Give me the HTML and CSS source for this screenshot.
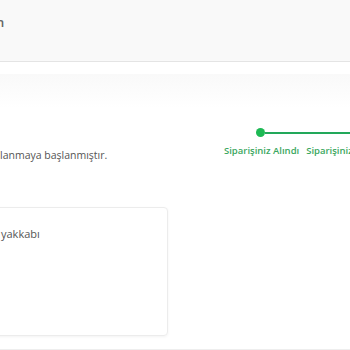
FILE: index.html
```html
<!DOCTYPE html>
<html lang="tr">

<head>
    <meta charset="UTF-8">
    <meta name="viewport" content="width=device-width, initial-scale=1.0">
    <title>Sipariş Detayı</title>
    <link rel="stylesheet" href="styles.css">
</head>

<body>
    <div class="page-head">
        <span class="head-title">n</span>
    </div>

    <div class="head-shade"></div>

    <div class="status-row">
        <p class="status-text">lanmaya başlanmıştır.</p>
        <div class="stepper">
            <div class="step-track">
                <span class="step-dot"></span>
                <span class="step-line"></span>
            </div>
            <div class="step-labels">
                <span>Siparişiniz Alındı</span>
                <span>Siparişiniz</span>
            </div>
        </div>
    </div>

    <div class="product-card">
        <p class="product-name">yakkabı</p>
    </div>

    <div class="bottom-line"></div>
</body>

</html>
```

FILE: styles.css
```css
* {
    box-sizing: border-box;
    margin: 0;
    padding: 0;
}

body {
    width: 350px;
    height: 350px;
    overflow: hidden;
    background: #fff;
    font-family: "Open Sans", "Noto Sans", sans-serif;
    color: #555;
}

.page-head {
    height: 62px;
    padding-top: 14px;
    background: #f9f9f9;
    border-bottom: 1px solid #e4e4e4;
}

.head-title {
    display: block;
    margin-left: -4px;
    font-size: 13px;
    font-weight: 600;
    color: #666;
    line-height: 16px;
}

.head-shade {
    height: 34px;
    margin-top: 12px;
    background: linear-gradient(#f9f9f9, #fff);
}

.status-row {
    display: flex;
    justify-content: space-between;
    height: 99px;
    padding-top: 20px;
}

.status-text {
    margin-top: 20px;
    font-size: 10.5px;
    line-height: 14px;
    color: #555;
}

.stepper {
    width: 126px;
    flex-shrink: 0;
}

.step-track {
    display: flex;
    align-items: center;
    height: 9px;
    padding-left: 32px;
}

.step-dot {
    width: 9px;
    height: 9px;
    border-radius: 50%;
    background: #1db954;
    flex-shrink: 0;
}

.step-line {
    flex: 1;
    height: 2px;
    background: #22a85a;
}

.step-labels {
    display: flex;
    gap: 7px;
    margin-top: 8px;
    font-size: 9.5px;
    font-weight: 600;
    line-height: 12px;
    color: #3aa760;
    white-space: nowrap;
}

.product-card {
    width: 189px;
    height: 129px;
    margin-left: -21px;
    padding: 18px 0 0 21px;
    border: 1px solid #ececec;
    border-radius: 4px;
    box-shadow: 0 1px 3px rgba(0, 0, 0, 0.05);
}

.product-name {
    font-size: 11px;
    line-height: 15px;
    color: #555;
}

.bottom-line {
    margin-top: 13px;
    border-top: 1px solid #eee;
}
```
